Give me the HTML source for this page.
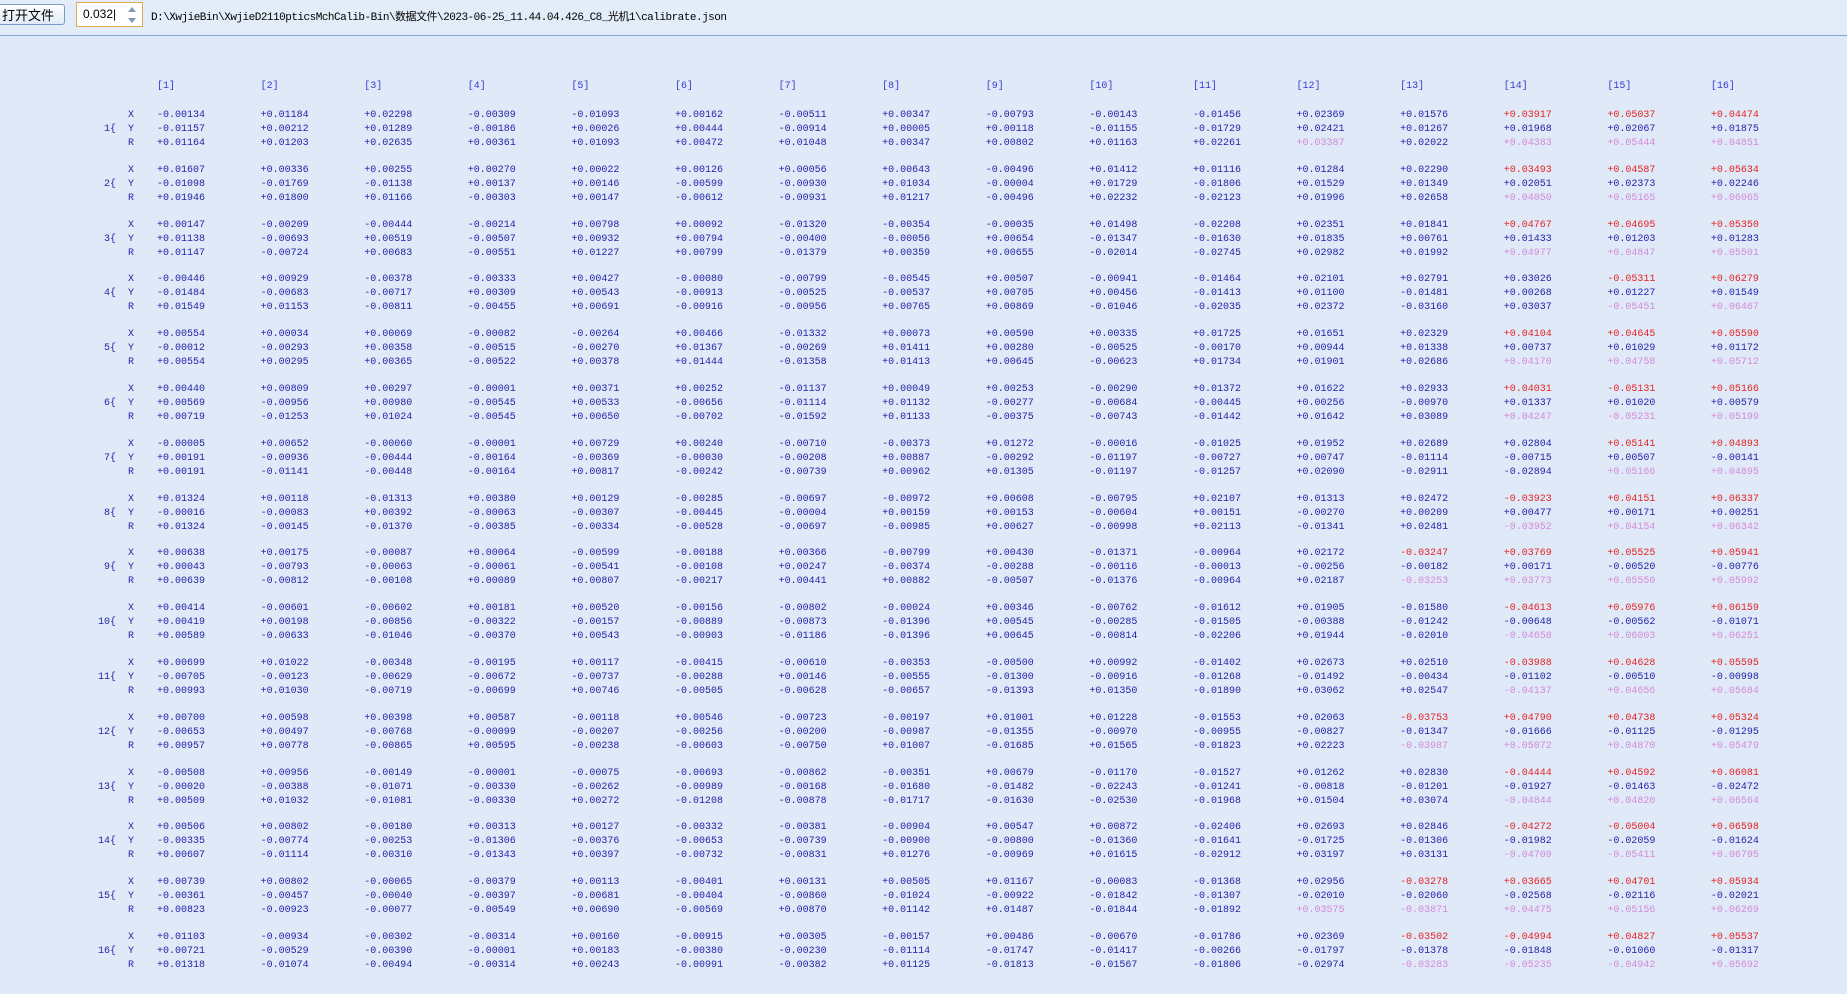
<!DOCTYPE html>
<html><head><meta charset="utf-8"><style>
html,body{margin:0;padding:0}
body{width:1847px;height:994px;background:#dfe9f7;position:relative;overflow:hidden;font-family:"Liberation Mono","Noto Sans CJK SC",monospace;color:#2424a8;}
.tb{position:absolute;left:0;top:0;width:1847px;height:35px;border-bottom:1px solid #7fa8d8;background:#e3edfa}
.btn{position:absolute;left:-2px;top:4px;width:67px;height:21px;border:1px solid #7a9cc8;border-radius:3px;background:linear-gradient(#fdfeff,#dfeaf8);font:13px "Noto Sans CJK SC",sans-serif;color:#000;line-height:19px;padding-left:3px;box-sizing:border-box;overflow:hidden;white-space:nowrap}
.inp{position:absolute;left:76px;top:2px;width:67px;height:25px;border:1px solid #e3a857;background:#fff;box-sizing:border-box;font:12px "Liberation Sans",sans-serif;color:#000;line-height:23px;padding-left:6px}
.inp .a{position:absolute;right:6px;top:4px;width:0;height:0;border:4px solid transparent;border-bottom:5px solid #7e9ab8;border-top:0}
.inp .b{position:absolute;right:6px;top:15px;width:0;height:0;border:4px solid transparent;border-top:5px solid #7e9ab8;border-bottom:0}
.path{position:absolute;left:151px;top:8px;font:11px "Liberation Mono","Noto Sans CJK SC",monospace;color:#000;letter-spacing:-0.5px}
.hd{position:absolute;left:157px;top:80px;display:flex;font-size:10px;line-height:14px;color:#3a3ad0}
.hd span,.rw span{width:103.6px;flex:none}
.g{position:absolute;left:0;width:1847px;height:42px;margin-top:3px}
.rw{position:absolute;left:157px;display:flex;font-size:10px;line-height:14px;white-space:pre}
.lb{position:absolute;left:128px;font-size:10px;line-height:14px}
.gl{position:absolute;left:92px;width:24px;font-size:10px;line-height:14px;top:14px;text-align:right}
.r{color:#e42424}.p{color:#d48ad8}
</style></head><body>
<div class="tb">
<div class="btn">打开文件</div>
<div class="inp">0.032|<div class="a"></div><div class="b"></div></div>
<div class="path">D:\XwjieBin\XwjieD2110pticsMchCalib-Bin\数据文件\2023-06-25_11.44.04.426_C8_光机1\calibrate.json</div>
</div>
<div class="hd"><span>[1]</span><span>[2]</span><span>[3]</span><span>[4]</span><span>[5]</span><span>[6]</span><span>[7]</span><span>[8]</span><span>[9]</span><span>[10]</span><span>[11]</span><span>[12]</span><span>[13]</span><span>[14]</span><span>[15]</span><span>[16]</span></div>

<div class="g" style="top:106px"><div class="lb" style="top:0">X</div><div class="lb" style="top:14px">Y</div><div class="lb" style="top:28px">R</div><div class="gl">1{</div>
<div class="rw" style="top:0"><span>-0.00134</span><span>+0.01184</span><span>+0.02298</span><span>-0.00309</span><span>-0.01093</span><span>+0.00162</span><span>-0.00511</span><span>+0.00347</span><span>-0.00793</span><span>-0.00143</span><span>-0.01456</span><span>+0.02369</span><span>+0.01576</span><span class="r">+0.03917</span><span class="r">+0.05037</span><span class="r">+0.04474</span></div>
<div class="rw" style="top:14px"><span>-0.01157</span><span>+0.00212</span><span>+0.01289</span><span>-0.00186</span><span>+0.00026</span><span>+0.00444</span><span>-0.00914</span><span>+0.00005</span><span>+0.00118</span><span>-0.01155</span><span>-0.01729</span><span>+0.02421</span><span>+0.01267</span><span>+0.01968</span><span>+0.02067</span><span>+0.01875</span></div>
<div class="rw" style="top:28px"><span>+0.01164</span><span>+0.01203</span><span>+0.02635</span><span>+0.00361</span><span>+0.01093</span><span>+0.00472</span><span>+0.01048</span><span>+0.00347</span><span>+0.00802</span><span>+0.01163</span><span>+0.02261</span><span class="p">+0.03387</span><span>+0.02022</span><span class="p">+0.04383</span><span class="p">+0.05444</span><span class="p">+0.04851</span></div></div>

<div class="g" style="top:160.8px"><div class="lb" style="top:0">X</div><div class="lb" style="top:14px">Y</div><div class="lb" style="top:28px">R</div><div class="gl">2{</div>
<div class="rw" style="top:0"><span>+0.01607</span><span>+0.00336</span><span>+0.00255</span><span>+0.00270</span><span>+0.00022</span><span>+0.00126</span><span>+0.00056</span><span>+0.00643</span><span>-0.00496</span><span>+0.01412</span><span>+0.01116</span><span>+0.01284</span><span>+0.02290</span><span class="r">+0.03493</span><span class="r">+0.04587</span><span class="r">+0.05634</span></div>
<div class="rw" style="top:14px"><span>-0.01098</span><span>-0.01769</span><span>-0.01138</span><span>+0.00137</span><span>+0.00146</span><span>-0.00599</span><span>-0.00930</span><span>+0.01034</span><span>-0.00004</span><span>+0.01729</span><span>-0.01806</span><span>+0.01529</span><span>+0.01349</span><span>+0.02051</span><span>+0.02373</span><span>+0.02246</span></div>
<div class="rw" style="top:28px"><span>+0.01946</span><span>+0.01800</span><span>+0.01166</span><span>-0.00303</span><span>+0.00147</span><span>-0.00612</span><span>-0.00931</span><span>+0.01217</span><span>-0.00496</span><span>+0.02232</span><span>-0.02123</span><span>+0.01996</span><span>+0.02658</span><span class="p">+0.04050</span><span class="p">+0.05165</span><span class="p">+0.06065</span></div></div>

<div class="g" style="top:215.6px"><div class="lb" style="top:0">X</div><div class="lb" style="top:14px">Y</div><div class="lb" style="top:28px">R</div><div class="gl">3{</div>
<div class="rw" style="top:0"><span>+0.00147</span><span>-0.00209</span><span>-0.00444</span><span>-0.00214</span><span>+0.00798</span><span>+0.00092</span><span>-0.01320</span><span>-0.00354</span><span>-0.00035</span><span>+0.01498</span><span>-0.02208</span><span>+0.02351</span><span>+0.01841</span><span class="r">+0.04767</span><span class="r">+0.04695</span><span class="r">+0.05350</span></div>
<div class="rw" style="top:14px"><span>+0.01138</span><span>-0.00693</span><span>+0.00519</span><span>-0.00507</span><span>+0.00932</span><span>+0.00794</span><span>-0.00400</span><span>-0.00056</span><span>+0.00654</span><span>-0.01347</span><span>-0.01630</span><span>+0.01835</span><span>+0.00761</span><span>+0.01433</span><span>+0.01203</span><span>+0.01283</span></div>
<div class="rw" style="top:28px"><span>+0.01147</span><span>-0.00724</span><span>+0.00683</span><span>-0.00551</span><span>+0.01227</span><span>+0.00799</span><span>-0.01379</span><span>+0.00359</span><span>+0.00655</span><span>-0.02014</span><span>-0.02745</span><span>+0.02982</span><span>+0.01992</span><span class="p">+0.04977</span><span class="p">+0.04847</span><span class="p">+0.05501</span></div></div>

<div class="g" style="top:270.4px"><div class="lb" style="top:0">X</div><div class="lb" style="top:14px">Y</div><div class="lb" style="top:28px">R</div><div class="gl">4{</div>
<div class="rw" style="top:0"><span>-0.00446</span><span>+0.00929</span><span>-0.00378</span><span>-0.00333</span><span>+0.00427</span><span>-0.00080</span><span>-0.00799</span><span>-0.00545</span><span>+0.00507</span><span>-0.00941</span><span>-0.01464</span><span>+0.02101</span><span>+0.02791</span><span>+0.03026</span><span class="r">-0.05311</span><span class="r">+0.06279</span></div>
<div class="rw" style="top:14px"><span>-0.01484</span><span>-0.00683</span><span>-0.00717</span><span>+0.00309</span><span>+0.00543</span><span>-0.00913</span><span>-0.00525</span><span>-0.00537</span><span>+0.00705</span><span>+0.00456</span><span>-0.01413</span><span>+0.01100</span><span>-0.01481</span><span>+0.00268</span><span>+0.01227</span><span>+0.01549</span></div>
<div class="rw" style="top:28px"><span>+0.01549</span><span>+0.01153</span><span>-0.00811</span><span>-0.00455</span><span>+0.00691</span><span>-0.00916</span><span>-0.00956</span><span>+0.00765</span><span>+0.00869</span><span>-0.01046</span><span>-0.02035</span><span>+0.02372</span><span>-0.03160</span><span>+0.03037</span><span class="p">-0.05451</span><span class="p">+0.06467</span></div></div>

<div class="g" style="top:325.2px"><div class="lb" style="top:0">X</div><div class="lb" style="top:14px">Y</div><div class="lb" style="top:28px">R</div><div class="gl">5{</div>
<div class="rw" style="top:0"><span>+0.00554</span><span>+0.00034</span><span>+0.00069</span><span>-0.00082</span><span>-0.00264</span><span>+0.00466</span><span>-0.01332</span><span>+0.00073</span><span>+0.00590</span><span>+0.00335</span><span>+0.01725</span><span>+0.01651</span><span>+0.02329</span><span class="r">+0.04104</span><span class="r">+0.04645</span><span class="r">+0.05590</span></div>
<div class="rw" style="top:14px"><span>-0.00012</span><span>-0.00293</span><span>+0.00358</span><span>-0.00515</span><span>-0.00270</span><span>+0.01367</span><span>-0.00269</span><span>+0.01411</span><span>+0.00280</span><span>-0.00525</span><span>-0.00170</span><span>+0.00944</span><span>+0.01338</span><span>+0.00737</span><span>+0.01029</span><span>+0.01172</span></div>
<div class="rw" style="top:28px"><span>+0.00554</span><span>+0.00295</span><span>+0.00365</span><span>-0.00522</span><span>+0.00378</span><span>+0.01444</span><span>-0.01358</span><span>+0.01413</span><span>+0.00645</span><span>-0.00623</span><span>+0.01734</span><span>+0.01901</span><span>+0.02686</span><span class="p">+0.04170</span><span class="p">+0.04758</span><span class="p">+0.05712</span></div></div>

<div class="g" style="top:380px"><div class="lb" style="top:0">X</div><div class="lb" style="top:14px">Y</div><div class="lb" style="top:28px">R</div><div class="gl">6{</div>
<div class="rw" style="top:0"><span>+0.00440</span><span>+0.00809</span><span>+0.00297</span><span>-0.00001</span><span>+0.00371</span><span>+0.00252</span><span>-0.01137</span><span>+0.00049</span><span>+0.00253</span><span>-0.00290</span><span>+0.01372</span><span>+0.01622</span><span>+0.02933</span><span class="r">+0.04031</span><span class="r">-0.05131</span><span class="r">+0.05166</span></div>
<div class="rw" style="top:14px"><span>+0.00569</span><span>-0.00956</span><span>+0.00980</span><span>-0.00545</span><span>+0.00533</span><span>-0.00656</span><span>-0.01114</span><span>+0.01132</span><span>-0.00277</span><span>-0.00684</span><span>-0.00445</span><span>+0.00256</span><span>-0.00970</span><span>+0.01337</span><span>+0.01020</span><span>+0.00579</span></div>
<div class="rw" style="top:28px"><span>+0.00719</span><span>-0.01253</span><span>+0.01024</span><span>-0.00545</span><span>+0.00650</span><span>-0.00702</span><span>-0.01592</span><span>+0.01133</span><span>-0.00375</span><span>-0.00743</span><span>-0.01442</span><span>+0.01642</span><span>+0.03089</span><span class="p">+0.04247</span><span class="p">-0.05231</span><span class="p">+0.05199</span></div></div>

<div class="g" style="top:434.8px"><div class="lb" style="top:0">X</div><div class="lb" style="top:14px">Y</div><div class="lb" style="top:28px">R</div><div class="gl">7{</div>
<div class="rw" style="top:0"><span>-0.00005</span><span>+0.00652</span><span>-0.00060</span><span>-0.00001</span><span>+0.00729</span><span>+0.00240</span><span>-0.00710</span><span>-0.00373</span><span>+0.01272</span><span>-0.00016</span><span>-0.01025</span><span>+0.01952</span><span>+0.02689</span><span>+0.02804</span><span class="r">+0.05141</span><span class="r">+0.04893</span></div>
<div class="rw" style="top:14px"><span>+0.00191</span><span>-0.00936</span><span>-0.00444</span><span>-0.00164</span><span>-0.00369</span><span>-0.00030</span><span>-0.00208</span><span>+0.00887</span><span>-0.00292</span><span>-0.01197</span><span>-0.00727</span><span>+0.00747</span><span>-0.01114</span><span>-0.00715</span><span>+0.00507</span><span>-0.00141</span></div>
<div class="rw" style="top:28px"><span>+0.00191</span><span>-0.01141</span><span>-0.00448</span><span>-0.00164</span><span>+0.00817</span><span>-0.00242</span><span>-0.00739</span><span>+0.00962</span><span>+0.01305</span><span>-0.01197</span><span>-0.01257</span><span>+0.02090</span><span>-0.02911</span><span>-0.02894</span><span class="p">+0.05166</span><span class="p">+0.04895</span></div></div>

<div class="g" style="top:489.6px"><div class="lb" style="top:0">X</div><div class="lb" style="top:14px">Y</div><div class="lb" style="top:28px">R</div><div class="gl">8{</div>
<div class="rw" style="top:0"><span>+0.01324</span><span>+0.00118</span><span>-0.01313</span><span>+0.00380</span><span>+0.00129</span><span>-0.00285</span><span>-0.00697</span><span>-0.00972</span><span>+0.00608</span><span>-0.00795</span><span>+0.02107</span><span>+0.01313</span><span>+0.02472</span><span class="r">-0.03923</span><span class="r">+0.04151</span><span class="r">+0.06337</span></div>
<div class="rw" style="top:14px"><span>-0.00016</span><span>-0.00083</span><span>+0.00392</span><span>-0.00063</span><span>-0.00307</span><span>-0.00445</span><span>-0.00004</span><span>+0.00159</span><span>+0.00153</span><span>-0.00604</span><span>+0.00151</span><span>-0.00270</span><span>+0.00209</span><span>+0.00477</span><span>+0.00171</span><span>+0.00251</span></div>
<div class="rw" style="top:28px"><span>+0.01324</span><span>-0.00145</span><span>-0.01370</span><span>-0.00385</span><span>-0.00334</span><span>-0.00528</span><span>-0.00697</span><span>-0.00985</span><span>+0.00627</span><span>-0.00998</span><span>+0.02113</span><span>-0.01341</span><span>+0.02481</span><span class="p">-0.03952</span><span class="p">+0.04154</span><span class="p">+0.06342</span></div></div>

<div class="g" style="top:544.4px"><div class="lb" style="top:0">X</div><div class="lb" style="top:14px">Y</div><div class="lb" style="top:28px">R</div><div class="gl">9{</div>
<div class="rw" style="top:0"><span>+0.00638</span><span>+0.00175</span><span>-0.00087</span><span>+0.00064</span><span>-0.00599</span><span>-0.00188</span><span>+0.00366</span><span>-0.00799</span><span>+0.00430</span><span>-0.01371</span><span>-0.00964</span><span>+0.02172</span><span class="r">-0.03247</span><span class="r">+0.03769</span><span class="r">+0.05525</span><span class="r">+0.05941</span></div>
<div class="rw" style="top:14px"><span>+0.00043</span><span>-0.00793</span><span>-0.00063</span><span>-0.00061</span><span>-0.00541</span><span>-0.00108</span><span>+0.00247</span><span>-0.00374</span><span>-0.00288</span><span>-0.00116</span><span>-0.00013</span><span>-0.00256</span><span>-0.00182</span><span>+0.00171</span><span>-0.00520</span><span>-0.00776</span></div>
<div class="rw" style="top:28px"><span>+0.00639</span><span>-0.00812</span><span>-0.00108</span><span>+0.00089</span><span>+0.00807</span><span>-0.00217</span><span>+0.00441</span><span>+0.00882</span><span>-0.00507</span><span>-0.01376</span><span>-0.00964</span><span>+0.02187</span><span class="p">-0.03253</span><span class="p">+0.03773</span><span class="p">+0.05550</span><span class="p">+0.05992</span></div></div>

<div class="g" style="top:599.2px"><div class="lb" style="top:0">X</div><div class="lb" style="top:14px">Y</div><div class="lb" style="top:28px">R</div><div class="gl">10{</div>
<div class="rw" style="top:0"><span>+0.00414</span><span>-0.00601</span><span>-0.00602</span><span>+0.00181</span><span>+0.00520</span><span>-0.00156</span><span>-0.00802</span><span>-0.00024</span><span>+0.00346</span><span>-0.00762</span><span>-0.01612</span><span>+0.01905</span><span>-0.01580</span><span class="r">-0.04613</span><span class="r">+0.05976</span><span class="r">+0.06159</span></div>
<div class="rw" style="top:14px"><span>+0.00419</span><span>+0.00198</span><span>-0.00856</span><span>-0.00322</span><span>-0.00157</span><span>-0.00889</span><span>-0.00873</span><span>-0.01396</span><span>+0.00545</span><span>-0.00285</span><span>-0.01505</span><span>-0.00388</span><span>-0.01242</span><span>-0.00648</span><span>-0.00562</span><span>-0.01071</span></div>
<div class="rw" style="top:28px"><span>+0.00589</span><span>-0.00633</span><span>-0.01046</span><span>-0.00370</span><span>+0.00543</span><span>-0.00903</span><span>-0.01186</span><span>-0.01396</span><span>+0.00645</span><span>-0.00814</span><span>-0.02206</span><span>+0.01944</span><span>-0.02010</span><span class="p">-0.04658</span><span class="p">+0.06003</span><span class="p">+0.06251</span></div></div>

<div class="g" style="top:654px"><div class="lb" style="top:0">X</div><div class="lb" style="top:14px">Y</div><div class="lb" style="top:28px">R</div><div class="gl">11{</div>
<div class="rw" style="top:0"><span>+0.00699</span><span>+0.01022</span><span>-0.00348</span><span>-0.00195</span><span>+0.00117</span><span>-0.00415</span><span>-0.00610</span><span>-0.00353</span><span>-0.00500</span><span>+0.00992</span><span>-0.01402</span><span>+0.02673</span><span>+0.02510</span><span class="r">-0.03988</span><span class="r">+0.04628</span><span class="r">+0.05595</span></div>
<div class="rw" style="top:14px"><span>-0.00705</span><span>-0.00123</span><span>-0.00629</span><span>-0.00672</span><span>-0.00737</span><span>-0.00288</span><span>+0.00146</span><span>-0.00555</span><span>-0.01300</span><span>-0.00916</span><span>-0.01268</span><span>-0.01492</span><span>-0.00434</span><span>-0.01102</span><span>-0.00510</span><span>-0.00998</span></div>
<div class="rw" style="top:28px"><span>+0.00993</span><span>+0.01030</span><span>-0.00719</span><span>-0.00699</span><span>+0.00746</span><span>-0.00505</span><span>-0.00628</span><span>-0.00657</span><span>-0.01393</span><span>+0.01350</span><span>-0.01890</span><span>+0.03062</span><span>+0.02547</span><span class="p">-0.04137</span><span class="p">+0.04656</span><span class="p">+0.05684</span></div></div>

<div class="g" style="top:708.8px"><div class="lb" style="top:0">X</div><div class="lb" style="top:14px">Y</div><div class="lb" style="top:28px">R</div><div class="gl">12{</div>
<div class="rw" style="top:0"><span>+0.00700</span><span>+0.00598</span><span>+0.00398</span><span>+0.00587</span><span>-0.00118</span><span>+0.00546</span><span>-0.00723</span><span>-0.00197</span><span>+0.01001</span><span>+0.01228</span><span>-0.01553</span><span>+0.02063</span><span class="r">-0.03753</span><span class="r">+0.04790</span><span class="r">+0.04738</span><span class="r">+0.05324</span></div>
<div class="rw" style="top:14px"><span>-0.00653</span><span>+0.00497</span><span>-0.00768</span><span>-0.00099</span><span>-0.00207</span><span>-0.00256</span><span>-0.00200</span><span>-0.00987</span><span>-0.01355</span><span>-0.00970</span><span>-0.00955</span><span>-0.00827</span><span>-0.01347</span><span>-0.01666</span><span>-0.01125</span><span>-0.01295</span></div>
<div class="rw" style="top:28px"><span>+0.00957</span><span>+0.00778</span><span>-0.00865</span><span>+0.00595</span><span>-0.00238</span><span>-0.00603</span><span>-0.00750</span><span>+0.01007</span><span>-0.01685</span><span>+0.01565</span><span>-0.01823</span><span>+0.02223</span><span class="p">-0.03987</span><span class="p">+0.05072</span><span class="p">+0.04870</span><span class="p">+0.05479</span></div></div>

<div class="g" style="top:763.6px"><div class="lb" style="top:0">X</div><div class="lb" style="top:14px">Y</div><div class="lb" style="top:28px">R</div><div class="gl">13{</div>
<div class="rw" style="top:0"><span>-0.00508</span><span>+0.00956</span><span>-0.00149</span><span>-0.00001</span><span>-0.00075</span><span>-0.00693</span><span>-0.00862</span><span>-0.00351</span><span>+0.00679</span><span>-0.01170</span><span>-0.01527</span><span>+0.01262</span><span>+0.02830</span><span class="r">-0.04444</span><span class="r">+0.04592</span><span class="r">+0.06081</span></div>
<div class="rw" style="top:14px"><span>-0.00020</span><span>-0.00388</span><span>-0.01071</span><span>-0.00330</span><span>-0.00262</span><span>-0.00989</span><span>-0.00168</span><span>-0.01680</span><span>-0.01482</span><span>-0.02243</span><span>-0.01241</span><span>-0.00818</span><span>-0.01201</span><span>-0.01927</span><span>-0.01463</span><span>-0.02472</span></div>
<div class="rw" style="top:28px"><span>+0.00509</span><span>+0.01032</span><span>-0.01081</span><span>-0.00330</span><span>+0.00272</span><span>-0.01208</span><span>-0.00878</span><span>-0.01717</span><span>-0.01630</span><span>-0.02530</span><span>-0.01968</span><span>+0.01504</span><span>+0.03074</span><span class="p">-0.04844</span><span class="p">+0.04820</span><span class="p">+0.06564</span></div></div>

<div class="g" style="top:818.4px"><div class="lb" style="top:0">X</div><div class="lb" style="top:14px">Y</div><div class="lb" style="top:28px">R</div><div class="gl">14{</div>
<div class="rw" style="top:0"><span>+0.00506</span><span>+0.00802</span><span>-0.00180</span><span>+0.00313</span><span>+0.00127</span><span>-0.00332</span><span>-0.00381</span><span>-0.00904</span><span>+0.00547</span><span>+0.00872</span><span>-0.02406</span><span>+0.02693</span><span>+0.02846</span><span class="r">-0.04272</span><span class="r">-0.05004</span><span class="r">+0.06598</span></div>
<div class="rw" style="top:14px"><span>-0.00335</span><span>-0.00774</span><span>-0.00253</span><span>-0.01306</span><span>-0.00376</span><span>-0.00653</span><span>-0.00739</span><span>-0.00900</span><span>-0.00800</span><span>-0.01360</span><span>-0.01641</span><span>-0.01725</span><span>-0.01306</span><span>-0.01982</span><span>-0.02059</span><span>-0.01624</span></div>
<div class="rw" style="top:28px"><span>+0.00607</span><span>-0.01114</span><span>-0.00310</span><span>-0.01343</span><span>+0.00397</span><span>-0.00732</span><span>-0.00831</span><span>+0.01276</span><span>-0.00969</span><span>+0.01615</span><span>-0.02912</span><span>+0.03197</span><span>+0.03131</span><span class="p">-0.04709</span><span class="p">-0.05411</span><span class="p">+0.06795</span></div></div>

<div class="g" style="top:873.2px"><div class="lb" style="top:0">X</div><div class="lb" style="top:14px">Y</div><div class="lb" style="top:28px">R</div><div class="gl">15{</div>
<div class="rw" style="top:0"><span>+0.00739</span><span>+0.00802</span><span>-0.00065</span><span>-0.00379</span><span>+0.00113</span><span>-0.00401</span><span>+0.00131</span><span>+0.00505</span><span>+0.01167</span><span>-0.00083</span><span>-0.01368</span><span>+0.02956</span><span class="r">-0.03278</span><span class="r">+0.03665</span><span class="r">+0.04701</span><span class="r">+0.05934</span></div>
<div class="rw" style="top:14px"><span>-0.00361</span><span>-0.00457</span><span>-0.00040</span><span>-0.00397</span><span>-0.00681</span><span>-0.00404</span><span>-0.00860</span><span>-0.01024</span><span>-0.00922</span><span>-0.01842</span><span>-0.01307</span><span>-0.02010</span><span>-0.02060</span><span>-0.02568</span><span>-0.02116</span><span>-0.02021</span></div>
<div class="rw" style="top:28px"><span>+0.00823</span><span>-0.00923</span><span>-0.00077</span><span>-0.00549</span><span>+0.00690</span><span>-0.00569</span><span>+0.00870</span><span>+0.01142</span><span>+0.01487</span><span>-0.01844</span><span>-0.01892</span><span class="p">+0.03575</span><span class="p">-0.03871</span><span class="p">+0.04475</span><span class="p">+0.05156</span><span class="p">+0.06269</span></div></div>

<div class="g" style="top:928px"><div class="lb" style="top:0">X</div><div class="lb" style="top:14px">Y</div><div class="lb" style="top:28px">R</div><div class="gl">16{</div>
<div class="rw" style="top:0"><span>+0.01103</span><span>-0.00934</span><span>-0.00302</span><span>-0.00314</span><span>+0.00160</span><span>-0.00915</span><span>+0.00305</span><span>-0.00157</span><span>+0.00486</span><span>-0.00670</span><span>-0.01786</span><span>+0.02369</span><span class="r">-0.03502</span><span class="r">-0.04994</span><span class="r">+0.04827</span><span class="r">+0.05537</span></div>
<div class="rw" style="top:14px"><span>+0.00721</span><span>-0.00529</span><span>-0.00390</span><span>-0.00001</span><span>+0.00183</span><span>-0.00380</span><span>-0.00230</span><span>-0.01114</span><span>-0.01747</span><span>-0.01417</span><span>-0.00266</span><span>-0.01797</span><span>-0.01378</span><span>-0.01848</span><span>-0.01060</span><span>-0.01317</span></div>
<div class="rw" style="top:28px"><span>+0.01318</span><span>-0.01074</span><span>-0.00494</span><span>-0.00314</span><span>+0.00243</span><span>-0.00991</span><span>-0.00382</span><span>+0.01125</span><span>-0.01813</span><span>-0.01567</span><span>-0.01806</span><span>-0.02974</span><span class="p">-0.03283</span><span class="p">-0.05235</span><span class="p">-0.04942</span><span class="p">+0.05692</span></div></div>
</body></html>
